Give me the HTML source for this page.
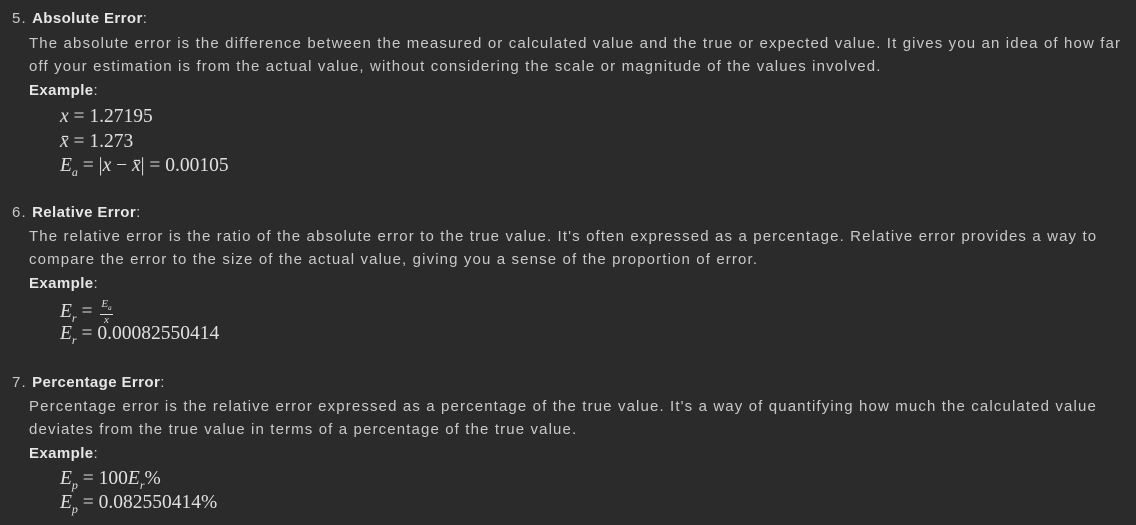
<!DOCTYPE html>
<html><head><meta charset="utf-8"><style>
body{margin:0;width:1136px;height:525px;background:#2b2b2b;overflow:hidden;position:relative;font-family:"Liberation Sans",sans-serif;color:#c9c9c9}
.l{position:absolute;white-space:nowrap;font-size:15px;line-height:20px;letter-spacing:1.13px;font-weight:300}
b{font-weight:bold;color:#e6e6e6;letter-spacing:0.4px}
.m{position:absolute;white-space:nowrap;font-family:"Liberation Serif",serif;font-size:19.5px;line-height:20px;color:#e0e0e0}
i{font-style:italic}
.fr{display:inline-block;vertical-align:middle;text-align:center;font-size:11px;line-height:11px;margin-left:3px}
.fr span{display:block}
.fr .n{border-bottom:1px solid #e0e0e0;padding:0 1px}
</style></head><body>
<div class="l" style="left:12px;top:9px">5. <b>Absolute Error</b>:</div>
<div class="l" style="left:29px;top:34px">The absolute error is the difference between the measured or calculated value and the true or expected value. It gives you an idea of how far</div>
<div class="l" style="left:29px;top:57px">off your estimation is from the actual value, without considering the scale or magnitude of the values involved.</div>
<div class="l" style="left:29px;top:81px"><b>Example</b>:</div>
<div class="m" style="left:60px;top:107px"><i>x</i> = 1.27195</div>
<div class="m" style="left:60px;top:132px"><i>x̄</i> = 1.273</div>
<div class="m" style="left:60px;top:156px"><i>E<sub style="font-size:12px">a</sub></i> = |<i>x</i> − <i>x̄</i>| = 0.00105</div>

<div class="l" style="left:12px;top:203px">6. <b>Relative Error</b>:</div>
<div class="l" style="left:29px;top:227px">The relative error is the ratio of the absolute error to the true value. It's often expressed as a percentage. Relative error provides a way to</div>
<div class="l" style="left:29px;top:250px">compare the error to the size of the actual value, giving you a sense of the proportion of error.</div>
<div class="l" style="left:29px;top:274px"><b>Example</b>:</div>
<div class="m" style="left:60px;top:299px"><i>E<sub style="font-size:12px">r</sub></i> = <span class="fr"><span class="n"><i>E<sub style="font-size:7px">a</sub></i></span><span><i>x</i></span></span></div>
<div class="m" style="left:60px;top:324px"><i>E<sub style="font-size:12px">r</sub></i> = 0.00082550414</div>

<div class="l" style="left:12px;top:373px">7. <b>Percentage Error</b>:</div>
<div class="l" style="left:29px;top:397px">Percentage error is the relative error expressed as a percentage of the true value. It's a way of quantifying how much the calculated value</div>
<div class="l" style="left:29px;top:420px">deviates from the true value in terms of a percentage of the true value.</div>
<div class="l" style="left:29px;top:444px"><b>Example</b>:</div>
<div class="m" style="left:60px;top:469px"><i>E<sub style="font-size:12px">p</sub></i> = 100<i>E<sub style="font-size:12px">r</sub></i>%</div>
<div class="m" style="left:60px;top:493px"><i>E<sub style="font-size:12px">p</sub></i> = 0.082550414%</div>
</body></html>
